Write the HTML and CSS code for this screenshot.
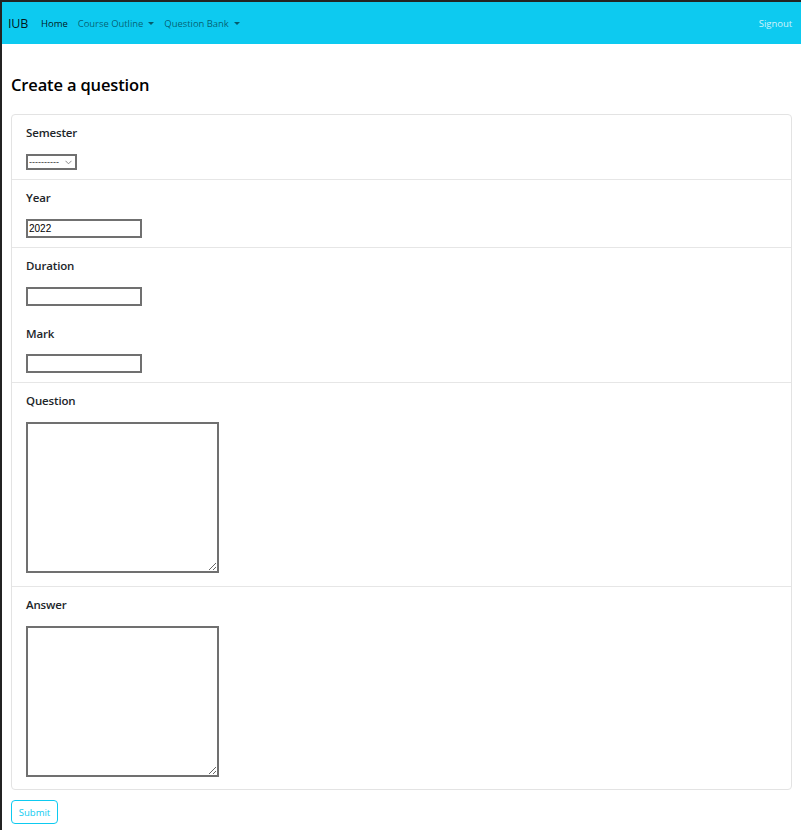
FILE: index.html
```html
<!DOCTYPE html>
<html>
<head>
<meta charset="utf-8">
<link rel="stylesheet" href="styles.css">
</head>
<body>
<div class="frame">
  <nav class="navbar">
    <a class="brand">IUB</a>
    <a class="nav-link active">Home</a>
    <a class="nav-link dropdown">Course Outline</a>
    <a class="nav-link dropdown">Question Bank</a>
    <a class="nav-link signout">Signout</a>
  </nav>
  <main class="content">
    <h3 class="title">Create a question</h3>
    <div class="card">
      <div class="section">
        <label class="label">Semester</label>
        <div class="select-wrap">
          <select class="select"><option>----------</option></select>
          <svg class="chev" width="7" height="5" viewBox="0 0 7 5"><path d="M0.5 0.8 L3.5 3.8 L6.5 0.8" fill="none" stroke="#8a8a8a" stroke-width="1"/></svg>
        </div>
      </div>
      <div class="section">
        <label class="label">Year</label>
        <input class="input" type="text" value="2022">
      </div>
      <div class="section">
        <label class="label">Duration</label>
        <input class="input" type="text">
        <label class="label second">Mark</label>
        <input class="input" type="text">
      </div>
      <div class="section tall question">
        <label class="label">Question</label>
        <textarea class="textarea"></textarea>
      </div>
      <div class="section tall">
        <label class="label">Answer</label>
        <textarea class="textarea"></textarea>
      </div>
    </div>
    <button class="btn">Submit</button>
  </main>
</div>
</body>
</html>
```

FILE: styles.css
```css
html, body {
  margin: 0;
  padding: 0;
  background: #ffffff;
}
body {
  font-family: "Open Sans", "Noto Sans", sans-serif;
  color: #212529;
}
.frame {
  border-top: 2px solid #232323;
  border-left: 2px solid #232323;
  min-height: 830px;
  box-sizing: border-box;
}
.navbar {
  background: #0dcaf0;
  height: 42px;
  display: flex;
  align-items: center;
  padding: 0 9px 0 6px;
}
.brand {
  font-size: 12.5px;
  color: rgba(0,0,0,0.9);
  margin-right: 13px;
  letter-spacing: -0.2px;
}
.nav-link {
  font-size: 9.5px;
  color: rgba(0,0,0,0.55);
  margin-right: 10px;
  letter-spacing: -0.05px;
}
.nav-link.active {
  color: rgba(0,0,0,0.9);
}
.dropdown::after {
  content: "";
  display: inline-block;
  margin-left: 5px;
  vertical-align: 2px;
  border-top: 3.5px solid currentColor;
  border-left: 3px solid transparent;
  border-right: 3px solid transparent;
}
.signout {
  margin-left: auto;
  margin-right: 0;
  color: rgba(255,255,255,0.8);
}
.content {
  padding: 0 9px;
}
.title {
  margin: 30px 0 18px;
  font-size: 16.5px;
  line-height: 22px;
  font-weight: 600;
  color: #000;
  letter-spacing: -0.15px;
}
.card {
  border: 1px solid #e3e3e3;
  border-radius: 4px;
}
.section {
  padding: 9px 14px 9px;
  border-top: 1px solid #e6e6e6;
}
.section:first-child {
  border-top: none;
}
.section.tall {
  padding-bottom: 12px;
}
.section.question {
  padding-bottom: 13px;
}
.label {
  display: block;
  font-size: 11.5px;
  line-height: 18px;
  font-weight: 600;
  margin-bottom: 12px;
  letter-spacing: -0.15px;
}
.label.second {
  margin-top: 19px;
  margin-bottom: 11px;
}
.select-wrap {
  position: relative;
  width: 51px;
  height: 16px;
}
.select {
  display: block;
  appearance: none;
  -webkit-appearance: none;
  width: 51px;
  height: 16px;
  box-sizing: border-box;
  border: 2px solid #707070;
  border-radius: 0;
  background: #fff;
  font-size: 9px;
  padding: 0 0 0 1px;
  color: #333;
  font-family: "Liberation Sans", sans-serif;
}
.chev {
  position: absolute;
  right: 5px;
  top: 6px;
  pointer-events: none;
}
.input {
  display: block;
  width: 116px;
  height: 19px;
  box-sizing: border-box;
  font-size: 10px;
  font-family: "Liberation Sans", sans-serif;
  padding: 1px 1px;
  border: 2px solid #707070;
  border-radius: 0;
  outline: none;
}
.textarea {
  display: block;
  width: 193px;
  height: 151px;
  box-sizing: border-box;
  margin: 0;
  border: 2px solid #707070;
  border-radius: 0;
}
.btn {
  margin-top: 10px;
  width: 47px;
  height: 24px;
  background: #fff;
  border: 1px solid #0dcaf0;
  border-radius: 4px;
  color: #0dcaf0;
  font-family: "Open Sans", sans-serif;
  font-size: 9.5px;
  padding: 0;
}
```
